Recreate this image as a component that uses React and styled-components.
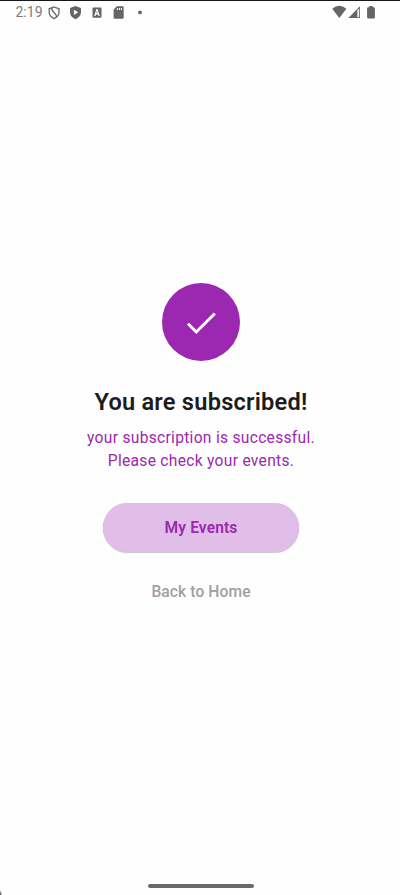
import React from "react";
import styled, { createGlobalStyle } from "styled-components";

const GlobalStyle = createGlobalStyle`
  * { box-sizing: border-box; }
  body { margin: 0; background: #fefefe; font-family: Roboto, "Noto Sans", sans-serif; }
`;

const Screen = styled.div`
  display: flex;
  flex-direction: column;
  height: 895px;
  width: 400px;
  overflow: hidden;
  border-top: 1px solid #1b141c;
  background: radial-gradient(ellipse 2px 5px at 0 100%, #222 0, #999 60%, transparent 100%), #fefefe;
`;

const StatusBar = styled.header`
  display: flex;
  justify-content: space-between;
  height: 24px;
  padding: 0 24px 0 15.5px;
  color: #656565;
`;

const StatusGroup = styled.div`
  display: flex;
`;

const Clock = styled.time`
  width: 32px;
  font-size: 14px;
  line-height: 23px;
  color: #7c7c7c;
  white-space: nowrap;
`;

const Glyph = styled.svg`
  display: block;
  flex: none;
  height: 24px;
  width: ${(p) => p.$width}px;
  fill: currentColor;
`;

const Content = styled.main`
  display: flex;
  flex-direction: column;
  align-items: center;
  flex: 1;
  padding: 258px 0 0 2px;
`;

const SuccessBadge = styled.div`
  display: grid;
  place-items: center;
  width: 78px;
  height: 78px;
  border-radius: 50%;
  background: #9c27b0;
`;

const Title = styled.h1`
  margin: 25px 0 0;
  font-size: 23.6px;
  line-height: 32px;
  font-weight: 600;
  letter-spacing: 0.23px;
  color: #1d1b20;
  white-space: nowrap;
`;

const Message = styled.p`
  margin: 9px 0 0;
  font-size: 15.6px;
  line-height: 23px;
  letter-spacing: 0.29px;
  text-align: center;
  color: #9c27b0;
`;

const PrimaryButton = styled.button`
  width: 196px;
  height: 49px;
  margin: 30px 0 0;
  padding: 0;
  border: 0;
  border-radius: 25px;
  background: #e1bee7;
  box-shadow: 0 1px 1px rgba(0, 0, 0, 0.2), 0 0 1px rgba(0, 0, 0, 0.15);
  color: #9c27b0;
  font: 600 15.6px/24px Roboto, sans-serif;
  letter-spacing: 0.1px;
`;

const TextButton = styled.button`
  margin: 28px 0 0;
  padding: 0;
  border: 0;
  background: none;
  color: #a0a0a0;
  font: 500 15.6px/24px Roboto, sans-serif;
  letter-spacing: 0.1px;
`;

const NavigationBar = styled.footer`
  display: flex;
  justify-content: center;
  height: 12px;
  padding-left: 2px;
`;

const HomeHandle = styled.div`
  width: 106px;
  height: 4px;
  margin-top: 1px;
  border-radius: 2px;
  background: #6a6a6a;
`;

export default function App() {
  return (
    <>
      <GlobalStyle />
      <Screen>
        <StatusBar>
          <StatusGroup>
            <Clock>2:19</Clock>
            <Glyph $width={82.5} viewBox="47.5 1 82.5 24">
              <path d="M53.600 7l4.900 1.800v3.300c0 3-2 5.300-4.900 6.500-2.900-1.200-4.900-3.500-4.900-6.500V8.800zM51.200 8.300C50.800 12.500 56.500 12.500 56 16.800" fill="none" stroke="currentColor" strokeWidth="1.300" />
              <path fillRule="evenodd" d="M75 6l5.500 2v4c0 3.500-2.300 6-5.500 7.200-3.200-1.200-5.500-3.700-5.500-7.200V8zM73.400 9.700v5.200l4.300-2.600z" />
              <path fillRule="evenodd" d="M93 7.500h7q1 0 1 1v8.300q0 1-1 1h-7q-1 0-1-1v-8.300q0-1 1-1zM95.900 9l-2.200 7h1.300l.5-1.500h2l.5 1.500h1.300L97.100 9zm.6 1.800l.6 2.300h-1.200z" />
              <path fillRule="evenodd" d="M116.400 6.200h5.600q1.200 0 1.200 1.200v10.200q0 1.200-1.200 1.200h-7.700q-1.200 0-1.200-1.200V9.400zM116.400 8.100v2h1.100v-2zm2 0v2h1.100v-2zm2 0v2h1.100v-2z" />
            </Glyph>
            <Glyph $width={20} viewBox="130 1 20 24">
              <circle cx="140" cy="12.400" r="1.900" />
            </Glyph>
          </StatusGroup>
          <StatusGroup>
            <Glyph $width={46} viewBox="330 1 46 24">
              <path d="M332.200 8.700Q339.300 2.700 346.400 8.700L339.300 18z" />
              <path d="M348.300 18L360 6.200V18z" />
              <path d="M357.200 10.400L359.200 8.300v8.900h-2z" fill="#e8e8e8" />
              <path d="M369.200 6h3.600v1.200h.9q1.200 0 1.200 1.200v8.900q0 1.200-1.200 1.200h-5.400q-1.200 0-1.200-1.200V8.400q0-1.200 1.200-1.200h.9z" />
            </Glyph>
          </StatusGroup>
        </StatusBar>
        <Content>
          <SuccessBadge>
            <svg width="78" height="78" viewBox="0 0 78 78" fill="none">
              <path d="M26 40.700L34.300 49L52.800 30.500" stroke="#fff" strokeWidth="3" />
            </svg>
          </SuccessBadge>
          <Title>You are subscribed!</Title>
          <Message>
            your subscription is successful.
            <br />
            Please check your events.
          </Message>
          <PrimaryButton>My Events</PrimaryButton>
          <TextButton>Back to Home</TextButton>
        </Content>
        <NavigationBar>
          <HomeHandle />
        </NavigationBar>
      </Screen>
    </>
  );
}
